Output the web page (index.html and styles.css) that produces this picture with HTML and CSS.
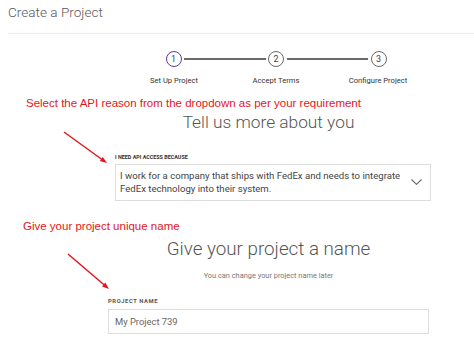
FILE: index.html
```html
<!DOCTYPE html>
<html lang="en">
<head>
  <meta charset="UTF-8" />
  <title>Create a Project</title>
  <link rel="stylesheet" href="styles.css">
</head>
<body>
  <header class="page-head"><h1>Create a Project</h1></header>

  <!-- Steps -->
  <div class="stepper">
    <div class="track">
      <span class="dot active">1</span>
      <span class="bar"></span>
      <span class="dot">2</span>
      <span class="bar"></span>
      <span class="dot">3</span>
    </div>
    <div class="labels">
      <span>Set Up Project</span>
      <span>Accept Terms</span>
      <span>Configure Project</span>
    </div>
  </div>

  <p class="note note-api">Select the API reason from the dropdown as per your requirement</p>

  <!-- Reason -->
  <section class="block">
    <h2 class="block-title">Tell us more about you</h2>
    <div class="field field-reason">
      <label class="field-label">I NEED API ACCESS BECAUSE</label>
      <div class="select-box">
        <span class="select-text">I work for a company that ships with FedEx and needs to integrate FedEx technology into their system.</span>
        <svg class="chevron" width="11" height="6" viewBox="0 0 11 6"><polyline points="0.5,0.5 5.5,5.3 10.5,0.5" fill="none" stroke="#666" stroke-width="1.1"/></svg>
      </div>
    </div>
  </section>

  <p class="note note-name">Give your project unique name</p>

  <!-- Name -->
  <section class="block">
    <h2 class="block-title big">Give your project a name</h2>
    <p class="hint">You can change your project name later</p>
    <div class="field field-name">
      <label class="field-label wide">PROJECT NAME</label>
      <div class="text-input">My Project 739</div>
    </div>
  </section>

  <!-- annotation arrows -->
  <svg class="arrows" width="474" height="341" viewBox="0 0 474 341">
    <line x1="64" y1="132" x2="102" y2="159.5" stroke="#e3161d" stroke-width="1.5"/>
    <polygon points="99.8,160.9 102.8,156.9 107,163" fill="#e3161d"/>
    <line x1="68" y1="254" x2="104" y2="284.8" stroke="#e3161d" stroke-width="1.5"/>
    <polygon points="102.1,286.4 105.3,282.6 109,289" fill="#e3161d"/>
  </svg>
</body>
</html>
```

FILE: styles.css
```css
body         {font-family: Roboto, "Liberation Sans", sans-serif; margin:0; background:#fff; color:#444; position:relative; width:474px; height:341px; overflow:hidden;}
h1, h2, p    {margin:0; font-weight:normal;}

.page-head   {margin-left:8px; padding:4px 0 12px; border-bottom:1px solid #ececec;}
.page-head h1 {font-size:13.6px; line-height:17px; font-weight:300; color:#5a5a5a;}

.stepper     {width:306px; margin:17px 0 0 123px;}
.track       {display:flex; align-items:center; padding:0 42.5px;}
.dot         {width:14px; height:14px; border:1.5px solid #6a6a6a; border-radius:50%; display:flex; align-items:center; justify-content:center; font-size:9px; color:#444; flex:none;}
.dot.active  {border-color:#5b3d8f;}
.bar         {flex:1; height:1.5px; background:#6a6a6a; margin:0 2.5px;}
.labels      {display:grid; grid-template-columns:repeat(3, 1fr); margin-top:9px; text-align:center; font-size:7.6px; line-height:10px; color:#333;}

.note        {font-family: "Liberation Sans", Arial, sans-serif; color:#e3161d; font-size:11.5px; line-height:13px;}
.note-api    {margin:10.5px 0 0 26px;}
.note-name   {margin:19.5px 0 0 23px;}

.block       {width:321px; margin-left:108px;}
.block-title {margin-top:2px; text-align:center; font-size:17.3px; line-height:21px; font-weight:300; color:#555;}
.block-title.big {margin-top:5px; font-size:18.8px; line-height:23px;}
.hint        {margin-top:10px; text-align:center; font-size:7.4px; line-height:10px; color:#777;}

.field       {display:flex; flex-direction:column;}
.field-reason {margin:21px -2px 0 7px;}
.field-name  {margin-top:17px;}
.field-label {font-size:5.4px; line-height:7px; font-weight:700; color:#333; margin-bottom:3px;}
.field-label.wide {font-size:5.8px; letter-spacing:0.6px; color:#555; margin-bottom:4px;}

.select-box  {height:37px; box-sizing:border-box; border:1px solid #ddd; display:flex; align-items:center; padding:0 8px 1px 4px; gap:10px;}
.select-text {flex:1; font-size:9.6px; line-height:13px; color:#444;}
.chevron     {flex:none;}

.text-input  {height:25px; box-sizing:border-box; border:1px solid #ddd; padding:0 6px; display:flex; align-items:center; font-size:9.4px; color:#666;}

.arrows      {position:absolute; left:0; top:0; pointer-events:none;}
```
